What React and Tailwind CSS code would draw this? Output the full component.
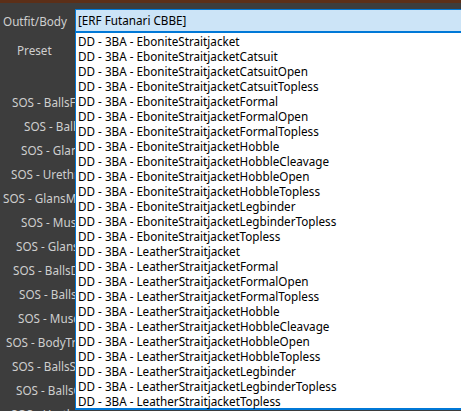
const items = [
  "EboniteStraitjacket",
  "EboniteStraitjacketCatsuit",
  "EboniteStraitjacketCatsuitOpen",
  "EboniteStraitjacketCatsuitTopless",
  "EboniteStraitjacketFormal",
  "EboniteStraitjacketFormalOpen",
  "EboniteStraitjacketFormalTopless",
  "EboniteStraitjacketHobble",
  "EboniteStraitjacketHobbleCleavage",
  "EboniteStraitjacketHobbleOpen",
  "EboniteStraitjacketHobbleTopless",
  "EboniteStraitjacketLegbinder",
  "EboniteStraitjacketLegbinderTopless",
  "EboniteStraitjacketTopless",
  "LeatherStraitjacket",
  "LeatherStraitjacketFormal",
  "LeatherStraitjacketFormalOpen",
  "LeatherStraitjacketFormalTopless",
  "LeatherStraitjacketHobble",
  "LeatherStraitjacketHobbleCleavage",
  "LeatherStraitjacketHobbleOpen",
  "LeatherStraitjacketHobbleTopless",
  "LeatherStraitjacketLegbinder",
  "LeatherStraitjacketLegbinderTopless",
  "LeatherStraitjacketTopless",
];

const sliders = [
  { text: "SOS - BallsFlaccid", pad: "pl-[12px]" },
  { text: "SOS - Ballsize", pad: "pl-[24px]" },
  { text: "SOS - Glansize", pad: "pl-[21px]" },
  { text: "SOS - UrethraSize", pad: "pl-[11px]" },
  { text: "SOS - GlansMushroom", pad: "pl-[3px]" },
  { text: "SOS - Muscle", pad: "pl-[21px]" },
  { text: "SOS - GlansSize", pad: "pl-[16px]" },
  { text: "SOS - BallsDrop", pad: "pl-[13px]" },
  { text: "SOS - BallsSize", pad: "pl-[19px]" },
  { text: "SOS - MuscleBody", pad: "pl-[18px]" },
  { text: "SOS - BodyTrim", pad: "pl-[6px]" },
  { text: "SOS - BallsSmall", pad: "pl-[12px]" },
  { text: "SOS - BallsClose", pad: "pl-[16px]" },
  { text: "SOS - Urethra", pad: "pl-[11px]" },
];

const font = { fontFamily: '"Noto Sans", "Open Sans", sans-serif' };

export default function App() {
  return (
    <div className="w-[461px] h-[411px] overflow-hidden bg-[#3d3d3d] text-[11.7px]" style={font}>
      <div className="h-[3px] bg-[#5c2f18]" />

      <div className="relative">
        {/* LABELS */}
        <div className="w-[75px] overflow-hidden text-[#cfcfcf] whitespace-nowrap">
          <div className="h-[36px] flex items-center pl-[3px] pt-[1px]">Outfit/Body</div>
          <div className="h-[22px] flex items-center pl-[17px] pt-[2px]">Preset</div>
          <div className="h-[30px]" />
          {sliders.map((s, i) => (
            <div key={i} className={`h-[24px] flex items-center ${s.pad}`}>
              {s.text}
            </div>
          ))}
        </div>

        {/* COMBOBOX + OPEN LIST */}
        <div className="absolute top-[6px] left-[75px] w-[400px]">
          <div className="h-[23px] bg-[#cce4f7] border border-[#0078d7] flex items-center pl-[2px] pt-[1px] text-black">
            [ERF Futanari CBBE]
          </div>
          <div className="bg-white border-l border-t border-b-2 border-[#0078d7] text-black">
            {items.map((name, i) => (
              <div key={i} className="h-[15px] leading-[15px] pl-[2px] pt-[1px] whitespace-nowrap">
                DD - 3BA - {name}
              </div>
            ))}
          </div>
        </div>
      </div>
    </div>
  );
}
